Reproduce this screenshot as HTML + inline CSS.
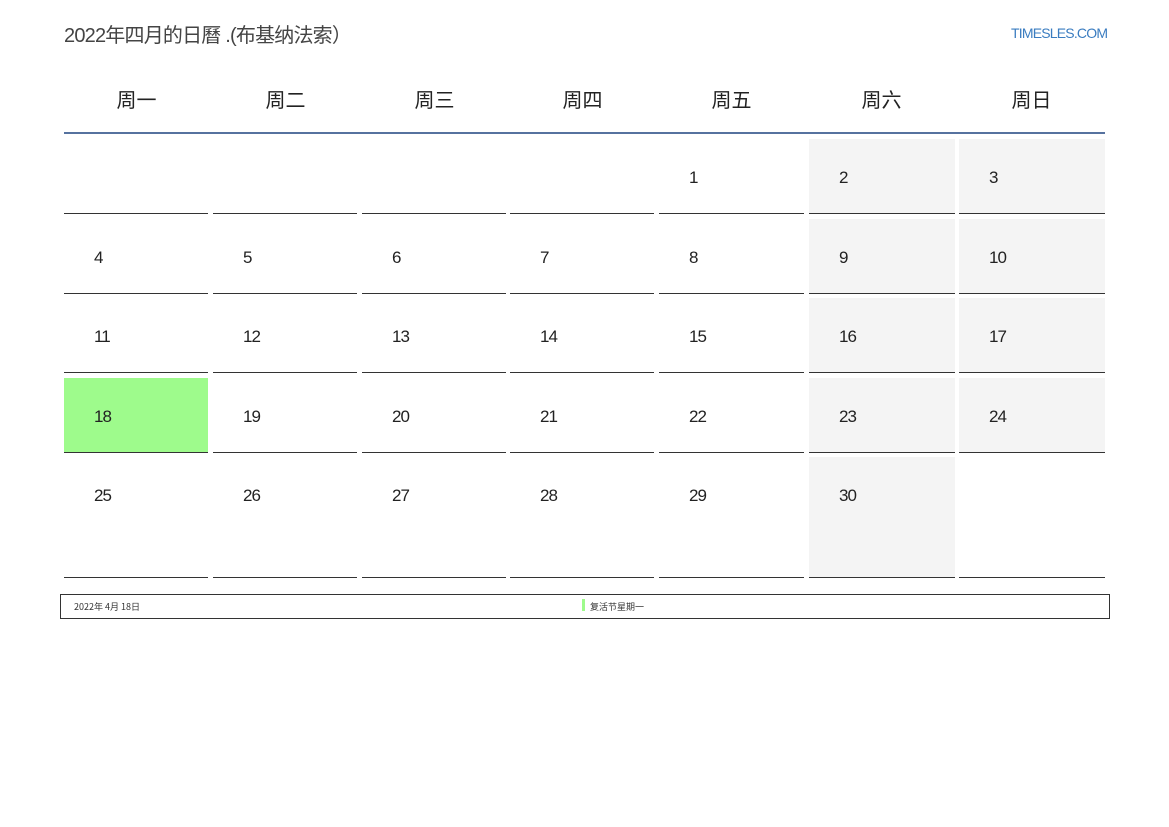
<!DOCTYPE html>
<html><head><meta charset="utf-8"><style>
body{margin:0;width:1169px;height:827px;background:#fff;position:relative;font-family:"Liberation Sans","Noto Sans CJK SC",sans-serif;overflow:hidden}
.a{position:absolute}
.t{left:64px;top:19px;font-size:20px;color:#444;letter-spacing:-0.8px}
.logo{left:1011px;top:25px;font-size:14px;color:#3a7cc0;letter-spacing:-0.8px}
.h{top:84px;width:145px;text-align:center;font-size:20px;color:#222;font-family:"Noto Sans CJK SC",sans-serif}
.hl{left:64px;top:132px;width:1041px;height:2px;background:#56729f}
.c{box-sizing:border-box;border-bottom:1px solid #333}
.n{position:absolute;left:30px;font-size:17px;color:#222;letter-spacing:-1px}
.g{background:#f4f4f4}
.gr{background:#9efb8c}
.f{left:60px;top:594px;width:1048px;height:23px;border:1px solid #333;font-size:9px;color:#333;font-family:"Noto Sans CJK SC",sans-serif}
</style></head><body>
<div class="a t">2022年四月的日曆 .(布基纳法索）</div>
<div class="a logo">TIMESLES.COM</div>
<div class="a h" style="left:64px">周一</div>
<div class="a h" style="left:213px">周二</div>
<div class="a h" style="left:362px">周三</div>
<div class="a h" style="left:510px">周四</div>
<div class="a h" style="left:659px">周五</div>
<div class="a h" style="left:809px">周六</div>
<div class="a h" style="left:959px">周日</div>
<div class="a hl"></div>
<div id="g"></div>
<div class="a f"><span class="a" style="left:13px;top:5px">2022年 4月 18日</span><span class="a" style="left:521px;top:4px;width:3px;height:12px;background:#9efb8c"></span><span class="a" style="left:529px;top:5px">复活节星期一</span></div>
<script>
var L=[64,213,362,510,659,809,959],W=[144,144,144,144,145,146,146],T=[139,219,298,378,457],B=[214,294,373,453,578];
var h='';
for(var r=0;r<5;r++)for(var c=0;c<7;c++){var i=r*7+c-4,num=(i>=0&&i<30)?i+1:'';
var cls='a c';if(c>=5&&num!=='')cls+=' g';if(num===18)cls+=' gr';
h+='<div class="'+cls+'" style="left:'+L[c]+'px;top:'+T[r]+'px;width:'+W[c]+'px;height:'+(B[r]-T[r])+'px"><span class="n" style="top:29px">'+num+'</span></div>';}
document.getElementById('g').innerHTML=h;
</script>
</body></html>
